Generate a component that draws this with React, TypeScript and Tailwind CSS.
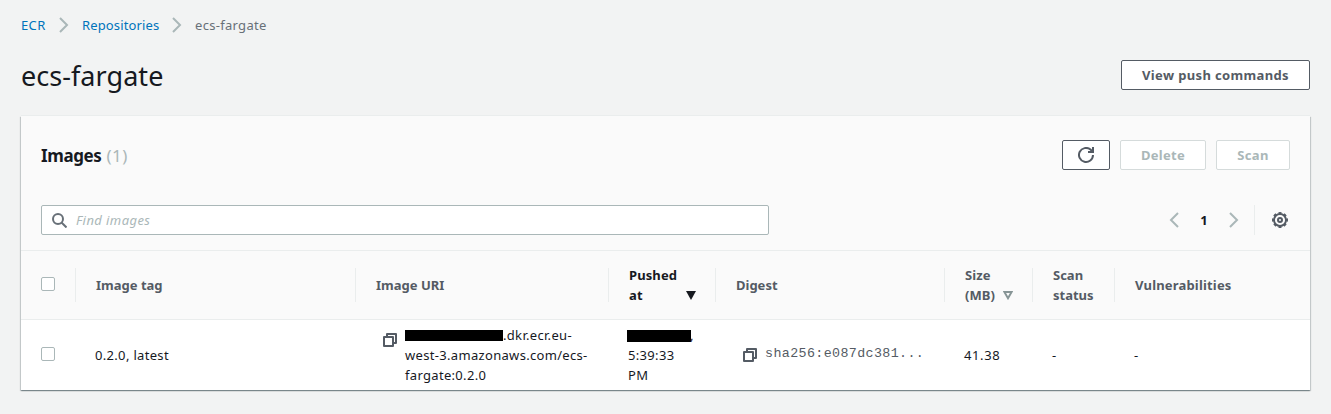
import React from "react";

function Chevron({ left = false, className = "" }: { left?: boolean; className?: string }) {
  return (
    <svg className={`shrink-0 ${className}`} width="10" height="16" viewBox="0 0 10 16" fill="none" stroke="#aab7b8" strokeWidth="2">
      <path d={left ? "M9 1 2 8l7 7" : "M1 1l7 7-7 7"} />
    </svg>
  );
}

function CopyIcon({ className = "" }: { className?: string }) {
  return (
    <svg className={`shrink-0 ${className}`} width="14" height="14" viewBox="0 0 14 14" fill="none" stroke="#545b64" strokeWidth="2" strokeLinejoin="round">
      <path d="M1 4h9v9H1z" />
      <path d="M4 4V1h9v9h-3" />
    </svg>
  );
}

function GearIcon({ className = "" }: { className?: string }) {
  return (
    <svg className={className} width="16" height="16" viewBox="0 0 16 16" fill="none" stroke="#545b64">
      <circle cx="8" cy="8" r="6" strokeWidth="1.9" />
      <circle cx="8" cy="8" r="7" strokeWidth="2" pathLength="80" strokeDasharray="5.4 4.6" strokeDashoffset="2.7" />
      <circle cx="8" cy="8" r="2" strokeWidth="2" />
    </svg>
  );
}

function Checkbox() {
  return <span className="block h-[14px] w-[14px] rounded-[2px] border border-[#aab7b8] bg-white" />;
}

function HeadCell({ children, className = "" }: { children: React.ReactNode; className?: string }) {
  return (
    <div className={`flex h-[34px] items-center border-l border-[#eaeded] pl-5 font-bold tracking-[0.1px] text-[#545b64] ${className}`}>
      {children}
    </div>
  );
}

const columns = "grid grid-cols-[54px_280px_253px_107px_229px_88px_82px_196px] items-center";
const button = "flex h-[30px] items-center justify-center rounded-[2px] border bg-white text-[13px] font-bold";

export default function App() {
  return (
    <div className="h-[414px] w-[1331px] overflow-hidden bg-[#f2f3f3] px-[21px] font-['Noto_Sans',sans-serif] text-[13px] leading-5 text-[#16191f]">
      <nav className="flex h-[50px] items-center">
        <a className="w-[38px] tracking-[0.35px] text-[#0073bb]">ECR</a>
        <Chevron />
        <a className="ml-[13px] w-[90px] tracking-[0.14px] text-[#0073bb]">Repositories</a>
        <Chevron />
        <span className="ml-[13px] tracking-[0.3px] text-[#687078]">ecs-fargate</span>
      </nav>
      <header className="flex h-[66px] items-start justify-between">
        <h1 className="mt-[9px] text-[27px] leading-[34px] tracking-[0.05px]">ecs-fargate</h1>
        <button className={`${button} mt-[10px] w-[189px] border-[#545b64] tracking-[0.36px] text-[#545b64]`}>View push commands</button>
      </header>
      <main className="h-[274px] w-[1289px] bg-white shadow-[0_1px_1px_0_rgba(0,28,36,0.3),1px_1px_1px_0_rgba(0,28,36,0.15),-1px_1px_1px_0_rgba(0,28,36,0.15),0_-1px_0_0_#eaeded]">
        <section className="h-[135px] border-b border-[#eaeded] bg-[#fafafa] px-5 pt-6">
          <div className="flex h-[30px] items-center">
            <h2 className="mt-[2px] mr-auto text-[17px] font-bold tracking-[-0.4px]">
              Images <span className="ml-px font-normal tracking-[0.5px] text-[#aab7b8]">(1)</span>
            </h2>
            <button aria-label="Refresh" className={`${button} w-[48px] border-[#545b64]`}>
              <svg width="16" height="16" viewBox="0 0 16 16" fill="none" stroke="#545b64" strokeWidth="2">
                <path d="M15 8a7 7 0 1 1-2.5-5.4L15 5" />
                <path d="M15 0v5h-5" />
              </svg>
            </button>
            <button className={`${button} ml-[10px] w-[86px] border-[#d5dbdb] tracking-[0.3px] text-[#aab7b8]`}>Delete</button>
            <button className={`${button} ml-[10px] w-[74px] border-[#d5dbdb] tracking-[0.35px] text-[#aab7b8]`}>Scan</button>
          </div>
          <div className="mt-[35px] flex h-[30px] items-center">
            <div className="mr-auto flex h-[30px] w-[728px] items-center rounded-[2px] border border-[#aab7b8] bg-white pl-[10px]">
              <svg width="15" height="15" viewBox="0 0 15 15" fill="none" stroke="#687078" strokeWidth="2">
                <circle cx="6" cy="6" r="5" />
                <path d="m9.5 9.5 5 5" />
              </svg>
              <span className="ml-[9px] tracking-[0.42px] text-[#aab7b8] italic">Find images</span>
            </div>
            <Chevron left />
            <span className="w-[50px] text-center font-bold">1</span>
            <Chevron />
            <span className="ml-[15px] h-[30px] border-l border-[#eaeded]" />
            <GearIcon className="ml-[17px]" />
            <span className="w-[2px]" />
          </div>
        </section>
        <div className={`${columns} h-[69px] border-b border-[#eaeded] bg-[#fafafa]`}>
          <div className="-mt-[2px] pl-5"><Checkbox /></div>
          <HeadCell className="tracking-[0]!">Image tag</HeadCell>
          <HeadCell className="tracking-[0]!">Image URI</HeadCell>
          <HeadCell className="text-[#16191f]!">
            <span className="w-[57px]">Pushed<br />at</span>
            <svg className="mt-5" width="10" height="9" viewBox="0 0 10 9" fill="#16191f"><path d="M0 0h10L5 9z" /></svg>
          </HeadCell>
          <HeadCell className="tracking-[0]!">Digest</HeadCell>
          <HeadCell>
            <span className="w-[38px]">Size<br />(MB)</span>
            <svg className="mt-5" width="10" height="9" viewBox="0 0 10 9" fill="none" stroke="#879596" strokeWidth="1.9"><path d="M1.4 1h7.2L5 7.3z" /></svg>
          </HeadCell>
          <HeadCell className="tracking-[0]!"><span>Scan<br />status</span></HeadCell>
          <HeadCell className="tracking-[0.18px]!">Vulnerabilities</HeadCell>
        </div>
        <div className={`${columns} h-[70px] tracking-[0.32px]`}>
          <div className="-mt-[2px] pl-5"><Checkbox /></div>
          <div className="pl-5">0.2.0, latest</div>
          <div className="flex items-start pl-7">
            <CopyIcon className="mt-[8px]" />
            <div className="ml-2">
              <div className="flex items-center"><span className="h-[11px] w-[98px] bg-black" />.dkr.ecr.eu-</div>
              <div>west-3.amazonaws.com/ecs-</div>
              <div>fargate:0.2.0</div>
            </div>
          </div>
          <div className="pl-5">
            <div className="-ml-px flex items-center"><span className="mt-px h-[12px] w-[64px] bg-black" /><span className="-ml-px">,</span></div>
            <div>5:39:33</div>
            <div>PM</div>
          </div>
          <div className="flex items-center pl-7">
            <CopyIcon />
            <span className="ml-2 -mt-[2px] font-['Liberation_Mono',monospace] text-[13.33px] tracking-[0.38px] text-[#545b64]">sha256:e087dc381...</span>
          </div>
          <div className="pl-5 tracking-[0.6px]">41.38</div>
          <div className="pl-5">-</div>
          <div className="pl-5">-</div>
        </div>
      </main>
    </div>
  );
}
